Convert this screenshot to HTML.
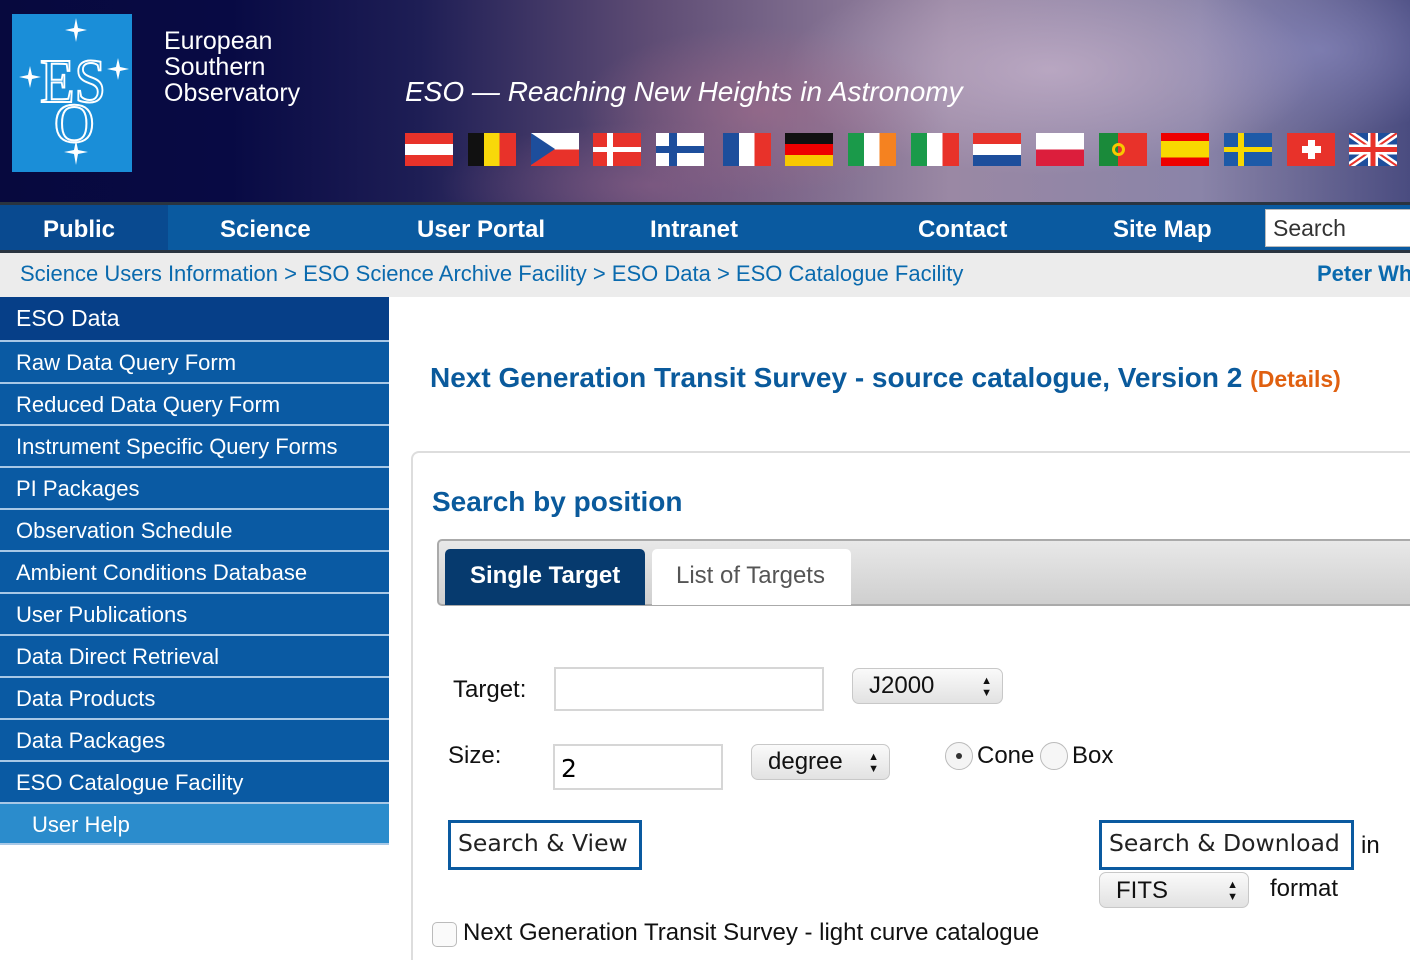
<!DOCTYPE html>
<html><head><meta charset="utf-8"><style>
*{margin:0;padding:0;box-sizing:border-box}
html,body{width:1410px;height:960px;overflow:hidden}
body{background:#fff;font-family:"Liberation Sans",Arial,sans-serif;position:relative}
.hdr{position:absolute;left:0;top:0;width:1410px;height:202px;background:
radial-gradient(ellipse 260px 120px at 760px 110px,rgba(170,110,140,.55),transparent 70%),
radial-gradient(ellipse 380px 150px at 1050px 70px,rgba(200,180,205,.7),transparent 70%),
radial-gradient(ellipse 250px 120px at 1320px 50px,rgba(140,140,195,.6),transparent 70%),
radial-gradient(ellipse 300px 90px at 650px 185px,rgba(150,100,140,.5),transparent 70%),
linear-gradient(90deg,#07093e 0,#080a44 230px,#1e1e55 420px,#5e4c74 650px,#9a88a4 950px,#8a84a8 1200px,#4a4c80 1410px)}
.logo{position:absolute;left:12px;top:14px;width:120px;height:158px;background:#1a8ed8}
.org{position:absolute;left:164px;top:28px;color:#fff;font-size:25px;line-height:26px}
.tag{position:absolute;left:405px;top:76px;color:#fff;font-size:28px;font-style:italic}
.flag{position:absolute;top:133px;width:48px;height:33px;overflow:hidden}
.nav{position:absolute;left:0;top:202px;width:1410px;height:51px;background:#0a5aa0;border-top:3px solid #2a3440;border-bottom:3px solid #2a3440}
.nav span{position:absolute;top:11px;color:#fff;font-weight:bold;font-size:24px}
.crumb{position:absolute;left:0;top:253px;width:1410px;height:44px;background:#ececec;color:#0a6aae;font-size:22px;white-space:nowrap}
.side{position:absolute;left:0;top:297px;width:389px}
.side div{height:42px;background:#0a5aa3;color:#fff;font-size:22px;padding:8px 0 0 16px;border-bottom:2px solid #a8c8e6}
.sel{position:absolute;border:1px solid #c8c8c8;border-radius:7px;background:linear-gradient(#fafafa,#e2e2e2);font-size:24px;padding-left:16px;color:#111}
.sel:after{content:"▲\A▼";white-space:pre;position:absolute;right:10px;top:6px;font-size:11px;line-height:12px}
.inp{position:absolute;border:2px solid #d6d6d6;background:#fff}
.btn{position:absolute;border:3px solid #0a5aa0;font-size:23.5px;color:#222;padding:6px 7px;font-family:"DejaVu Sans",sans-serif;white-space:nowrap}
.t{position:absolute;font-size:24px;color:#111;white-space:nowrap}
</style></head><body>
<div class="hdr">
 <div class="logo">
  <svg width="120" height="158" viewBox="0 0 120 158">
   <g fill="#fff"><path d="M64 4l2 10 9 2-9 2-2 10-2-10-9-2 9-2z"/>
   <path d="M18 52l2 9 9 2-9 2-2 9-2-9-9-2 9-2z"/><path d="M106 44l2 9 9 2-9 2-2 9-2-9-9-2 9-2z"/>
   <path d="M64 126l2 10 10 2-10 2-2 11-2-11-10-2 10-2z"/></g>
   <text x="28" y="88" font-family="Liberation Serif,serif" font-size="62" fill="none" stroke="#fff" stroke-width="2" textLength="66" lengthAdjust="spacingAndGlyphs">ES</text>
   <text x="42" y="128" font-family="Liberation Serif,serif" font-size="56" fill="none" stroke="#fff" stroke-width="2">O</text>
  </svg>
 </div>
 <div class="org">European<br>Southern<br>Observatory</div>
 <div class="tag">ESO — Reaching New Heights in Astronomy</div>
 <div class="flag" style="left:405px;background:linear-gradient(#e8322a 33%,#fff 33% 66%,#e8322a 66%)"></div>
 <div class="flag" style="left:468px;background:linear-gradient(90deg,#111 33%,#f8d80a 33% 66%,#e8322a 66%)"></div>
 <div class="flag" style="left:531px;background:linear-gradient(#fff 50%,#e8322a 50%)"><div style="width:0;height:0;border-top:16.5px solid transparent;border-bottom:16.5px solid transparent;border-left:24px solid #1d4e9c"></div></div>
 <div class="flag" style="left:593px;background:#e8322a"><div style="position:absolute;left:14px;top:0;width:6px;height:33px;background:#fff"></div><div style="position:absolute;left:0;top:14px;width:48px;height:5px;background:#fff"></div></div>
 <div class="flag" style="left:656px;background:#fff"><div style="position:absolute;left:13px;top:0;width:8px;height:33px;background:#1d4e9c"></div><div style="position:absolute;left:0;top:13px;width:48px;height:7px;background:#1d4e9c"></div></div>
 <div class="flag" style="left:723px;background:linear-gradient(90deg,#1d4e9c 33%,#fff 33% 66%,#e8322a 66%)"></div>
 <div class="flag" style="left:785px;background:linear-gradient(#111 33%,#e00 33% 66%,#f8c800 66%)"></div>
 <div class="flag" style="left:848px;background:linear-gradient(90deg,#1a9a4a 33%,#fff 33% 66%,#f58220 66%)"></div>
 <div class="flag" style="left:911px;background:linear-gradient(90deg,#1a9a4a 33%,#fff 33% 66%,#e8322a 66%)"></div>
 <div class="flag" style="left:973px;background:linear-gradient(#e8322a 33%,#fff 33% 66%,#1d4e9c 66%)"></div>
 <div class="flag" style="left:1036px;background:linear-gradient(#fff 50%,#dc1e3c 50%)"></div>
 <div class="flag" style="left:1099px;background:linear-gradient(90deg,#1a8a3a 40%,#e8322a 40%)"><div style="position:absolute;left:13px;top:10px;width:13px;height:13px;border-radius:50%;border:3px solid #f8c800"></div></div>
 <div class="flag" style="left:1161px;background:linear-gradient(#e00 25%,#f8d800 25% 75%,#e00 75%)"></div>
 <div class="flag" style="left:1224px;background:#1d5aa8"><div style="position:absolute;left:14px;top:0;width:6px;height:33px;background:#f8d800"></div><div style="position:absolute;left:0;top:14px;width:48px;height:5px;background:#f8d800"></div></div>
 <div class="flag" style="left:1287px;background:#e8322a"><div style="position:absolute;left:21px;top:7px;width:7px;height:19px;background:#fff"></div><div style="position:absolute;left:15px;top:13px;width:19px;height:7px;background:#fff"></div></div>
 <div class="flag" style="left:1349px;background:#1d4e9c"><svg width="48" height="33"><path d="M0 0L48 33M48 0L0 33" stroke="#fff" stroke-width="7"/><path d="M0 0L48 33M48 0L0 33" stroke="#e8322a" stroke-width="2"/><path d="M24 0v33M0 16.5h48" stroke="#fff" stroke-width="10"/><path d="M24 0v33M0 16.5h48" stroke="#e8322a" stroke-width="5"/></svg></div>
</div>
<div class="nav">
 <div style="position:absolute;left:0;top:0;width:168px;height:45px;background:#094a90"></div>
 <span style="left:43px">Public</span><span style="left:220px">Science</span><span style="left:417px">User Portal</span><span style="left:650px">Intranet</span><span style="left:918px">Contact</span><span style="left:1113px">Site Map</span>
 <div style="position:absolute;left:1265px;top:4px;width:150px;height:38px;background:#fff;border:1px solid #bbb;font-size:23px;color:#333;padding:5px 7px">Search</div>
</div>
<div class="crumb"><span style="position:absolute;left:20px;top:8px">Science Users Information &gt; ESO Science Archive Facility &gt; ESO Data &gt; ESO Catalogue Facility</span><b style="position:absolute;left:1317px;top:8px">Peter Wh</b></div>
<div class="side">
 <div style="background:#063f88;height:45px;padding-top:8px;font-size:23px">ESO Data</div>
 <div>Raw Data Query Form</div><div>Reduced Data Query Form</div><div>Instrument Specific Query Forms</div><div>PI Packages</div><div>Observation Schedule</div><div>Ambient Conditions Database</div><div>User Publications</div><div>Data Direct Retrieval</div><div>Data Products</div><div>Data Packages</div><div>ESO Catalogue Facility</div>
 <div style="background:#2b8ccc;padding-left:32px;height:41px">User Help</div>
</div>
<div style="position:absolute;left:430px;top:362px;font-size:28px;font-weight:bold;color:#0a5a9c;white-space:nowrap">Next Generation Transit Survey - source catalogue, Version 2 <span style="color:#e06010;font-size:23px">(Details)</span></div>
<div style="position:absolute;left:411px;top:451px;width:1020px;height:520px;border:2px solid #ddd;border-radius:8px"></div>
<div style="position:absolute;left:432px;top:486px;font-size:28px;font-weight:bold;color:#0a5a9c">Search by position</div>
<div style="position:absolute;left:437px;top:539px;width:990px;height:67px;border:2px solid #aaa;border-radius:5px;background:linear-gradient(#e8e8e8,#cfcfcf)"></div>
<div style="position:absolute;left:445px;top:549px;width:200px;height:56px;background:#063a6e;border-radius:5px 5px 0 0;color:#fff;font-weight:bold;font-size:24px;padding:13px 0 0 25px">Single Target</div>
<div style="position:absolute;left:652px;top:549px;width:199px;height:56px;background:#fff;border-radius:5px 5px 0 0;color:#555;font-size:24px;padding:13px 0 0 24px">List of Targets</div>
<div class="t" style="left:453px;top:676px">Target:</div>
<div class="inp" style="left:554px;top:667px;width:270px;height:44px"></div>
<div class="sel" style="left:852px;top:668px;width:151px;height:36px;padding-top:3px">J2000</div>
<div class="t" style="left:448px;top:742px">Size:</div>
<div class="inp" style="left:553px;top:744px;width:170px;height:46px;font-size:25px;padding:8px 6px;font-family:'DejaVu Sans',sans-serif">2</div>
<div class="sel" style="left:751px;top:744px;width:139px;height:36px;padding-top:3px">degree</div>
<div style="position:absolute;left:945px;top:742px;width:28px;height:28px;border-radius:50%;border:1px solid #bbb;background:#f4f4f4"><div style="position:absolute;left:10px;top:10px;width:6px;height:6px;border-radius:50%;background:#333"></div></div>
<div class="t" style="left:977px;top:742px">Cone</div>
<div style="position:absolute;left:1040px;top:742px;width:28px;height:28px;border-radius:50%;border:1px solid #bbb;background:#f6f6f6"></div>
<div class="t" style="left:1072px;top:742px">Box</div>
<div class="btn" style="left:448px;top:820px;width:194px;height:50px">Search &amp; View</div>
<div class="btn" style="left:1099px;top:820px;width:255px;height:50px">Search &amp; Download</div>
<div class="t" style="left:1361px;top:832px">in</div>
<div class="sel" style="left:1099px;top:872px;width:150px;height:36px;padding-top:4px">FITS</div>
<div class="t" style="left:1270px;top:875px">format</div>
<div style="position:absolute;left:432px;top:922px;width:25px;height:25px;border:1px solid #bbb;border-radius:5px;background:#fafafa"></div>
<div class="t" style="left:463px;top:919px">Next Generation Transit Survey - light curve catalogue</div>
</body></html>
